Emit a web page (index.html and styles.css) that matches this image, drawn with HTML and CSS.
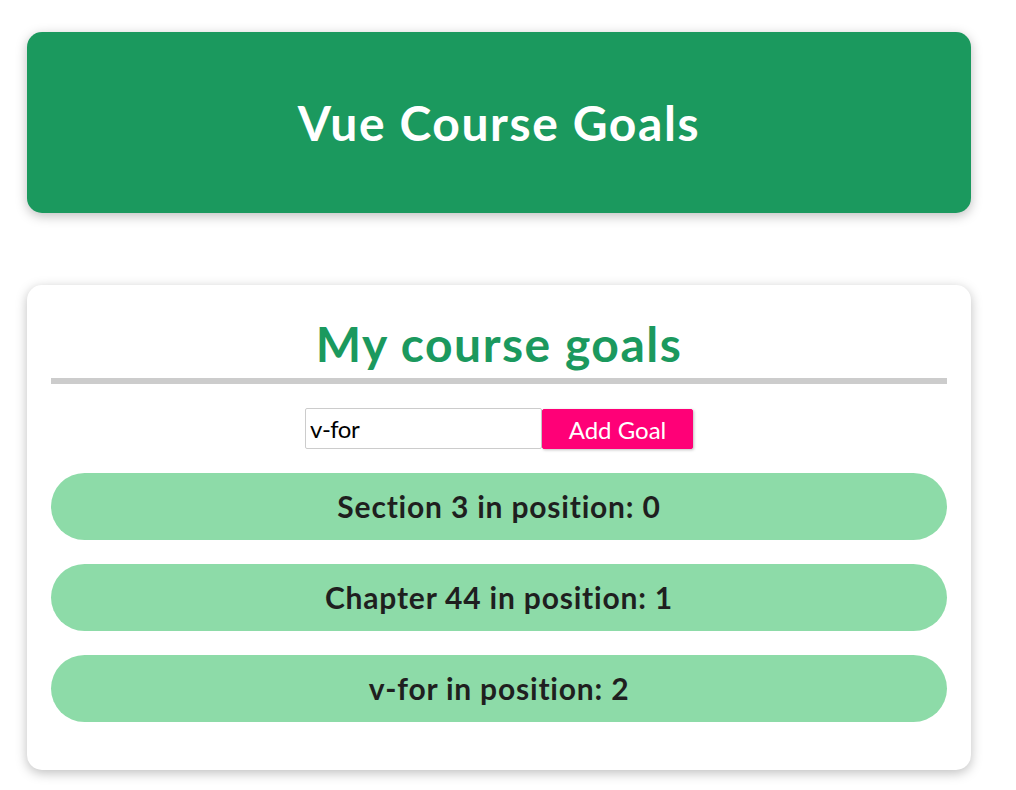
FILE: index.html
```html
<!DOCTYPE html>
<html lang="en">
<head>
<meta charset="utf-8">
<title>Vue Course Goals</title>
<link rel="stylesheet" href="styles.css">
</head>
<body>
  <header class="app-header">
    <h1 class="app-title">Vue Course Goals</h1>
  </header>
  <section class="goals-card">
    <h2 class="goals-title">My course goals</h2>
    <div class="goal-form">
      <input class="goal-input" type="text" value="v-for">
      <button class="goal-button">Add Goal</button>
    </div>
    <ul class="goal-list">
      <li class="goal-item">Section 3 in position: 0</li>
      <li class="goal-item">Chapter 44 in position: 1</li>
      <li class="goal-item">v-for in position: 2</li>
    </ul>
  </section>
</body>
</html>
```

FILE: styles.css
```css
* { box-sizing: border-box; }

html { font-family: "Lato", "Open Sans", sans-serif; }

body {
  margin: 0;
  padding: 32px 0 20px 27px;
  background: #ffffff;
}

.app-header {
  width: 944px;
  padding: 24px;
  background-color: #1b995e;
  color: #ffffff;
  text-align: center;
  border-radius: 15px;
  box-shadow: 0 3px 12px rgba(0, 0, 0, 0.26);
}

.app-title {
  margin: 32px 0;
  font-size: 48px;
  line-height: 69px;
  font-weight: 700;
  letter-spacing: 1.6px;
}

.goals-card {
  width: 944px;
  margin-top: 72px;
  padding: 24px;
  background: #ffffff;
  text-align: center;
  border-radius: 15px;
  box-shadow: 0 3px 12px rgba(0, 0, 0, 0.26);
}

.goals-title {
  margin: 0 0 24px 0;
  font-size: 48px;
  line-height: 69px;
  font-weight: 700;
  letter-spacing: 1.5px;
  color: #1b995e;
  border-bottom: 6px solid #cccccc;
}

.goal-form {
  display: flex;
  justify-content: center;
  align-items: flex-start;
}

.goal-input {
  width: 237px;
  height: 41px;
  padding: 0 4px;
  font: inherit;
  font-size: 24px;
  letter-spacing: -0.5px;
  color: #000000;
  border: 1px solid #cccccc;
  border-radius: 2px;
  background: #ffffff;
}

.goal-button {
  width: 151px;
  height: 40px;
  margin-top: 1px;
  padding: 0 24px;
  font: inherit;
  font-size: 24px;
  color: #ffffff;
  background-color: #ff0077;
  border: 1px solid #ff0077;
  border-radius: 2px;
  box-shadow: 1px 1px 3px rgba(0, 0, 0, 0.26);
}

.goal-list {
  list-style: none;
  margin: 24px 0;
  padding: 0;
  display: flex;
  flex-direction: column;
  gap: 24px;
}

.goal-item {
  padding: 12px;
  font-size: 30px;
  line-height: 43px;
  font-weight: 700;
  letter-spacing: 0.8px;
  color: #1f1f1f;
  background-color: #8ddba8;
  border-radius: 37.5px;
}
```
